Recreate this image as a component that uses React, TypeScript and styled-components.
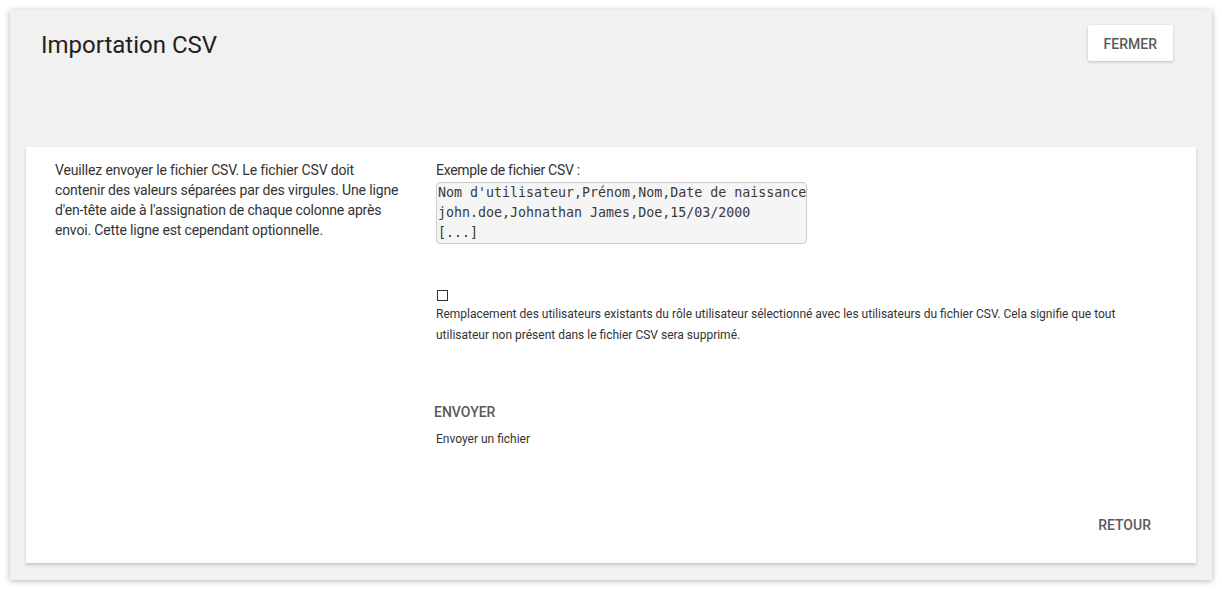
import React from "react";
import styled, { createGlobalStyle } from "styled-components";

const Global = createGlobalStyle`
  html, body { margin: 0; padding: 0; background: #ffffff; }
  body { font-family: Roboto, "Liberation Sans", sans-serif; color: #333; }
  * { box-sizing: border-box; }
`;

const Page = styled.div`
  padding: 10px;
  width: 1222px;
`;

const Card = styled.div`
  background: #f1f1f1;
  box-shadow: 0 1px 6px rgba(0, 0, 0, 0.3);
  height: 570px;
  padding: 0 16px 17px;
  display: flex;
  flex-direction: column;
`;

const Header = styled.div`
  display: flex;
  justify-content: space-between;
  align-items: flex-start;
  height: 137px;
  padding: 15px 23px 0 15px;
`;

const Title = styled.h1`
  margin: 0;
  padding-top: 5px;
  font-size: 24px;
  font-weight: 400;
  line-height: 30px;
  color: #212121;
`;

const Button = styled.button<{ $raised?: boolean }>`
  font-family: Roboto, "Liberation Sans", sans-serif;
  font-size: 14px;
  font-weight: 500;
  text-transform: uppercase;
  color: #5a5a5a;
  border: none;
  border-radius: 2px;
  height: 36px;
  padding: 2px 16px 0;
  background: ${(p) => (p.$raised ? "#ffffff" : "transparent")};
  box-shadow: ${(p) => (p.$raised ? "0 1px 3px rgba(0,0,0,0.2)" : "none")};
  cursor: pointer;
`;

const Panel = styled.div`
  flex: 1;
  background: #ffffff;
  box-shadow: 0 2px 3px rgba(0, 0, 0, 0.18);
  padding: 13px 29px 0 29px;
  display: flex;
  flex-direction: column;
`;

const Columns = styled.div`
  display: flex;
  gap: 31px;
`;

const Intro = styled.p`
  width: 350px;
  flex: none;
  margin: 0;
  font-size: 14px;
  line-height: 20px;
  letter-spacing: -0.15px;
  color: #333;
`;

const Main = styled.div`
  flex: 1;
  display: flex;
  flex-direction: column;
  align-items: flex-start;
`;

const Label = styled.div`
  font-size: 14px;
  line-height: 20px;
  color: #333;
  letter-spacing: -0.3px;
`;

const Pre = styled.pre`
  margin: 2px 0 0;
  padding: 0 0 0 1px;
  background: #f5f5f5;
  border: 1px solid #ccc;
  border-radius: 4px;
  font-family: "DejaVu Sans Mono", "Liberation Mono", monospace;
  font-size: 13.3px;
  line-height: 20px;
  color: #3a3a3a;
`;

const Check = styled.input`
  appearance: none;
  margin: 46px 0 0 1px;
  width: 11px;
  height: 11px;
  border: 1px solid #333;
  border-radius: 0;
  background: #fff;
`;

const Small = styled.p`
  margin: 3px 0 0;
  font-size: 12px;
  line-height: 21px;
  color: #333;
`;

const SendButton = styled(Button)`
  margin: 47px 0 0 -18px;
`;

const Hint = styled.div`
  font-size: 12px;
  line-height: 20px;
  color: #333;
`;

const Footer = styled.div`
  margin-top: auto;
  margin-bottom: 21px;
  display: flex;
  justify-content: flex-end;
`;

export default function App() {
  return (
    <>
      <Global />
      <Page>
        <Card>
          <Header>
            <Title>Importation CSV</Title>
            <Button $raised>Fermer</Button>
          </Header>
          <Panel>
            <Columns>
              <Intro>
                Veuillez envoyer le fichier CSV. Le fichier CSV doit contenir des
                valeurs séparées par des virgules. Une ligne d'en-tête aide à
                l'assignation de chaque colonne après envoi. Cette ligne est
                cependant optionnelle.
              </Intro>
              <Main>
                <Label>Exemple de fichier CSV :</Label>
                <Pre>
                  {"Nom d'utilisateur,Prénom,Nom,Date de naissance\njohn.doe,Johnathan James,Doe,15/03/2000\n[...]"}
                </Pre>
                <Check type="checkbox" />
                <Small>
                  Remplacement des utilisateurs existants du rôle utilisateur
                  sélectionné avec les utilisateurs du fichier CSV. Cela signifie
                  que tout utilisateur non présent dans le fichier CSV sera
                  supprimé.
                </Small>
                <SendButton>Envoyer</SendButton>
                <Hint>Envoyer un fichier</Hint>
              </Main>
            </Columns>
            <Footer>
              <Button>Retour</Button>
            </Footer>
          </Panel>
        </Card>
      </Page>
    </>
  );
}
